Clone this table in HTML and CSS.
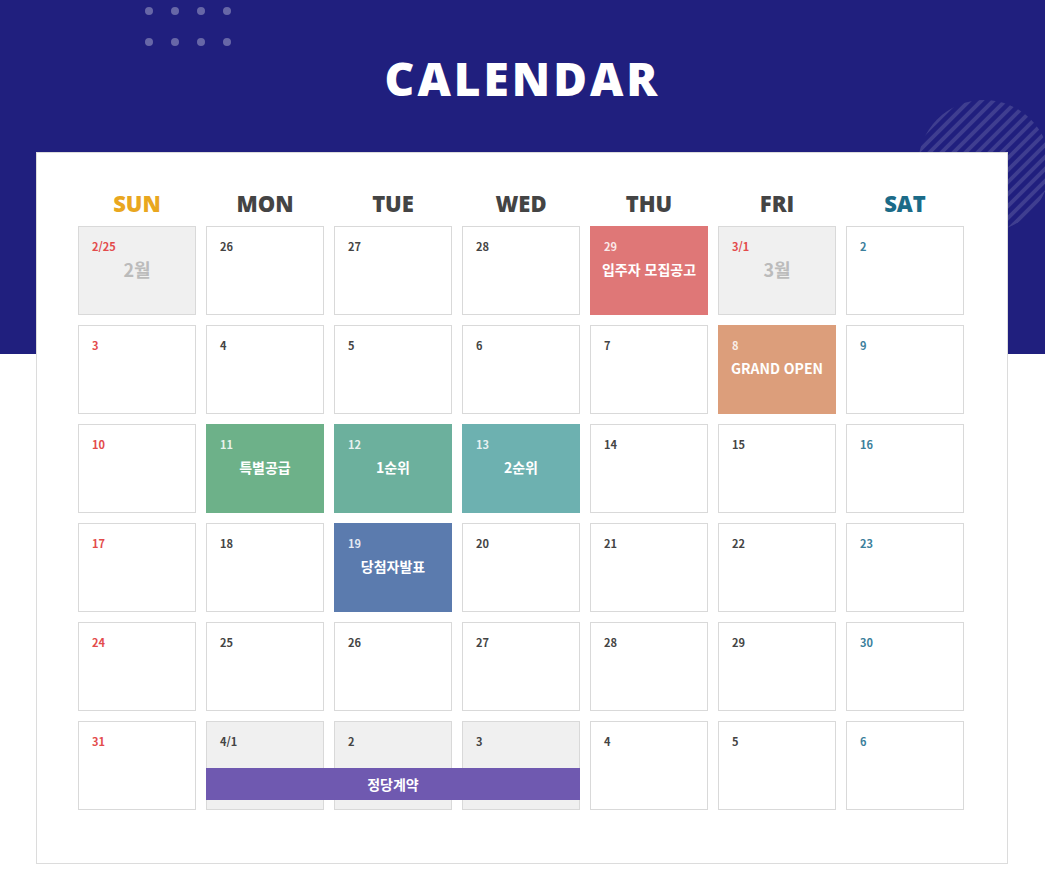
FILE: index.html
```html
<!DOCTYPE html>
<html lang="ko">

<head>
    <meta charset="UTF-8" />
    <meta name="viewport" content="width=device-width, initial-scale=1.0" />
    <title>Calendar</title>
    <link rel="stylesheet" href="styles.css">
</head>

<body>

    <div class="page">
        <div class="dots">
            <span></span><span></span><span></span><span></span>
            <span></span><span></span><span></span><span></span>
        </div>

        <svg class="stripes" width="140" height="140" viewBox="0 0 140 140">
            <defs>
                <clipPath id="circ">
                    <circle cx="70" cy="70" r="66" />
                </clipPath>
            </defs>
            <g clip-path="url(#circ)" stroke="rgba(255,255,255,0.14)" stroke-width="4">
                <line x1="-20" y1="20" x2="20" y2="-20" />
                <line x1="-20" y1="32" x2="32" y2="-20" />
                <line x1="-20" y1="44" x2="44" y2="-20" />
                <line x1="-20" y1="56" x2="56" y2="-20" />
                <line x1="-20" y1="68" x2="68" y2="-20" />
                <line x1="-20" y1="80" x2="80" y2="-20" />
                <line x1="-20" y1="92" x2="92" y2="-20" />
                <line x1="-20" y1="104" x2="104" y2="-20" />
                <line x1="-20" y1="116" x2="116" y2="-20" />
                <line x1="-20" y1="128" x2="128" y2="-20" />
                <line x1="-20" y1="140" x2="140" y2="-20" />
                <line x1="-20" y1="152" x2="152" y2="-20" />
                <line x1="-20" y1="164" x2="164" y2="-20" />
                <line x1="-20" y1="176" x2="176" y2="-20" />
                <line x1="-20" y1="188" x2="188" y2="-20" />
                <line x1="-20" y1="200" x2="200" y2="-20" />
                <line x1="-20" y1="212" x2="212" y2="-20" />
                <line x1="-20" y1="224" x2="224" y2="-20" />
                <line x1="-20" y1="236" x2="236" y2="-20" />
                <line x1="-20" y1="248" x2="248" y2="-20" />
                <line x1="-20" y1="260" x2="260" y2="-20" />
                <line x1="-20" y1="272" x2="272" y2="-20" />
                <line x1="-20" y1="284" x2="284" y2="-20" />
                <line x1="-20" y1="296" x2="296" y2="-20" />
            </g>
        </svg>

        <h1 class="title">CALENDAR</h1>

        <div class="board">
            <div class="week">
                <div class="sun">SUN</div>
                <div>MON</div>
                <div>TUE</div>
                <div>WED</div>
                <div>THU</div>
                <div>FRI</div>
                <div class="sat">SAT</div>
            </div>

            <div class="days">
                <div class="day off"><span class="num sun">2/25</span><b class="month">2월</b></div>
                <div class="day"><span class="num">26</span></div>
                <div class="day"><span class="num">27</span></div>
                <div class="day"><span class="num">28</span></div>
                <div class="day ev-notice"><span class="num">29</span><b class="event">입주자 모집공고</b></div>
                <div class="day off"><span class="num sun">3/1</span><b class="month">3월</b></div>
                <div class="day"><span class="num sat">2</span></div>

                <div class="day"><span class="num sun">3</span></div>
                <div class="day"><span class="num">4</span></div>
                <div class="day"><span class="num">5</span></div>
                <div class="day"><span class="num">6</span></div>
                <div class="day"><span class="num">7</span></div>
                <div class="day ev-open"><span class="num">8</span><b class="event">GRAND OPEN</b></div>
                <div class="day"><span class="num sat">9</span></div>

                <div class="day"><span class="num sun">10</span></div>
                <div class="day ev-special"><span class="num">11</span><b class="event">특별공급</b></div>
                <div class="day ev-first"><span class="num">12</span><b class="event">1순위</b></div>
                <div class="day ev-second"><span class="num">13</span><b class="event">2순위</b></div>
                <div class="day"><span class="num">14</span></div>
                <div class="day"><span class="num">15</span></div>
                <div class="day"><span class="num sat">16</span></div>

                <div class="day"><span class="num sun">17</span></div>
                <div class="day"><span class="num">18</span></div>
                <div class="day ev-winner"><span class="num">19</span><b class="event">당첨자발표</b></div>
                <div class="day"><span class="num">20</span></div>
                <div class="day"><span class="num">21</span></div>
                <div class="day"><span class="num">22</span></div>
                <div class="day"><span class="num sat">23</span></div>

                <div class="day"><span class="num sun">24</span></div>
                <div class="day"><span class="num">25</span></div>
                <div class="day"><span class="num">26</span></div>
                <div class="day"><span class="num">27</span></div>
                <div class="day"><span class="num">28</span></div>
                <div class="day"><span class="num">29</span></div>
                <div class="day"><span class="num sat">30</span></div>

                <div class="day"><span class="num sun">31</span></div>
                <div class="day off last c2"><span class="num">4/1</span></div>
                <div class="day off last c3"><span class="num">2</span></div>
                <div class="day off last c4"><span class="num">3</span></div>
                <div class="day"><span class="num">4</span></div>
                <div class="day"><span class="num">5</span></div>
                <div class="day"><span class="num sat">6</span></div>

                <div class="contract">정당계약</div>
            </div>
        </div>
    </div>

</body>

</html>
```

FILE: styles.css
```css
body {
    margin: 0;
    font-family: "Noto Sans CJK KR", "Noto Sans", sans-serif;
    background: #fff;
}

.page {
    position: relative;
    overflow: hidden;
    min-height: 870px;
    padding-top: 1px;
    background: linear-gradient(#201f7e 0, #201f7e 354px, #fff 354px);
}

/* decoration */

.dots {
    position: absolute;
    top: 7px;
    left: 145px;
    display: grid;
    grid-template-columns: repeat(4, 8px);
    column-gap: 18px;
    row-gap: 23px;
}

.dots span {
    width: 8px;
    height: 8px;
    border-radius: 50%;
    background: rgba(255, 255, 255, 0.32);
}

.stripes {
    position: absolute;
    top: 96px;
    left: 914px;
}

.title {
    margin: 50px 0 0;
    height: 101px;
    text-align: center;
    color: #fff;
    font-family: "Open Sans", sans-serif;
    font-weight: 800;
    font-size: 46px;
    line-height: 54px;
    letter-spacing: 3px;
}

/* board */

.board {
    position: relative;
    margin-left: 36px;
    width: 972px;
    height: 712px;
    box-sizing: border-box;
    border: 1px solid #dcdcdc;
    background: #fff;
    padding: 28px 43px 0 41px;
}

.week {
    display: grid;
    grid-template-columns: repeat(7, 118px);
    column-gap: 10px;
    height: 45px;
    line-height: 45px;
    text-align: center;
    font-family: "Open Sans", sans-serif;
    font-weight: 800;
    font-size: 22px;
    color: #444;
}

.week .sun {
    color: #e9a71f;
}

.week .sat {
    color: #1b6b88;
}

.days {
    display: grid;
    grid-template-columns: repeat(7, 118px);
    grid-auto-rows: 89px;
    gap: 10px;
}

.day {
    box-sizing: border-box;
    border: 1px solid #d9d9d9;
    padding: 10px 13px 0;
    display: flex;
    flex-direction: column;
    align-items: flex-start;
}

.num {
    font-size: 11px;
    font-weight: 700;
    line-height: 18px;
    color: #444;
}

.num.sun {
    color: #e34b4b;
}

.num.sat {
    color: #3c7f9c;
}

.off {
    background: #f0f0f0;
}

.month {
    align-self: center;
    margin-top: 1px;
    font-size: 18px;
    line-height: 26px;
    color: #bbb;
}

.event {
    align-self: center;
    margin-top: 1px;
    font-size: 14px;
    line-height: 26px;
    color: #fff;
    white-space: nowrap;
}

.ev-notice,
.ev-open,
.ev-special,
.ev-first,
.ev-second,
.ev-winner {
    border-color: transparent;
}

.ev-notice .num,
.ev-open .num,
.ev-special .num,
.ev-first .num,
.ev-second .num,
.ev-winner .num {
    color: rgba(255, 255, 255, 0.85);
}

.ev-notice {
    background: #df7777;
}

.ev-open {
    background: #dc9e7b;
}

.ev-special {
    background: #6db189;
}

.ev-first {
    background: #6cb09d;
}

.ev-second {
    background: #6db1b0;
}

.ev-winner {
    background: #5b7bae;
}

.last {
    grid-row: 6;
}

.c2 {
    grid-column: 2;
}

.c3 {
    grid-column: 3;
}

.c4 {
    grid-column: 4;
}

.contract {
    grid-row: 6;
    grid-column: 2 / 5;
    align-self: end;
    margin-bottom: 10px;
    height: 32px;
    line-height: 32px;
    text-align: center;
    background: #6f59b0;
    color: #fff;
    font-size: 14px;
    font-weight: 700;
}
```
